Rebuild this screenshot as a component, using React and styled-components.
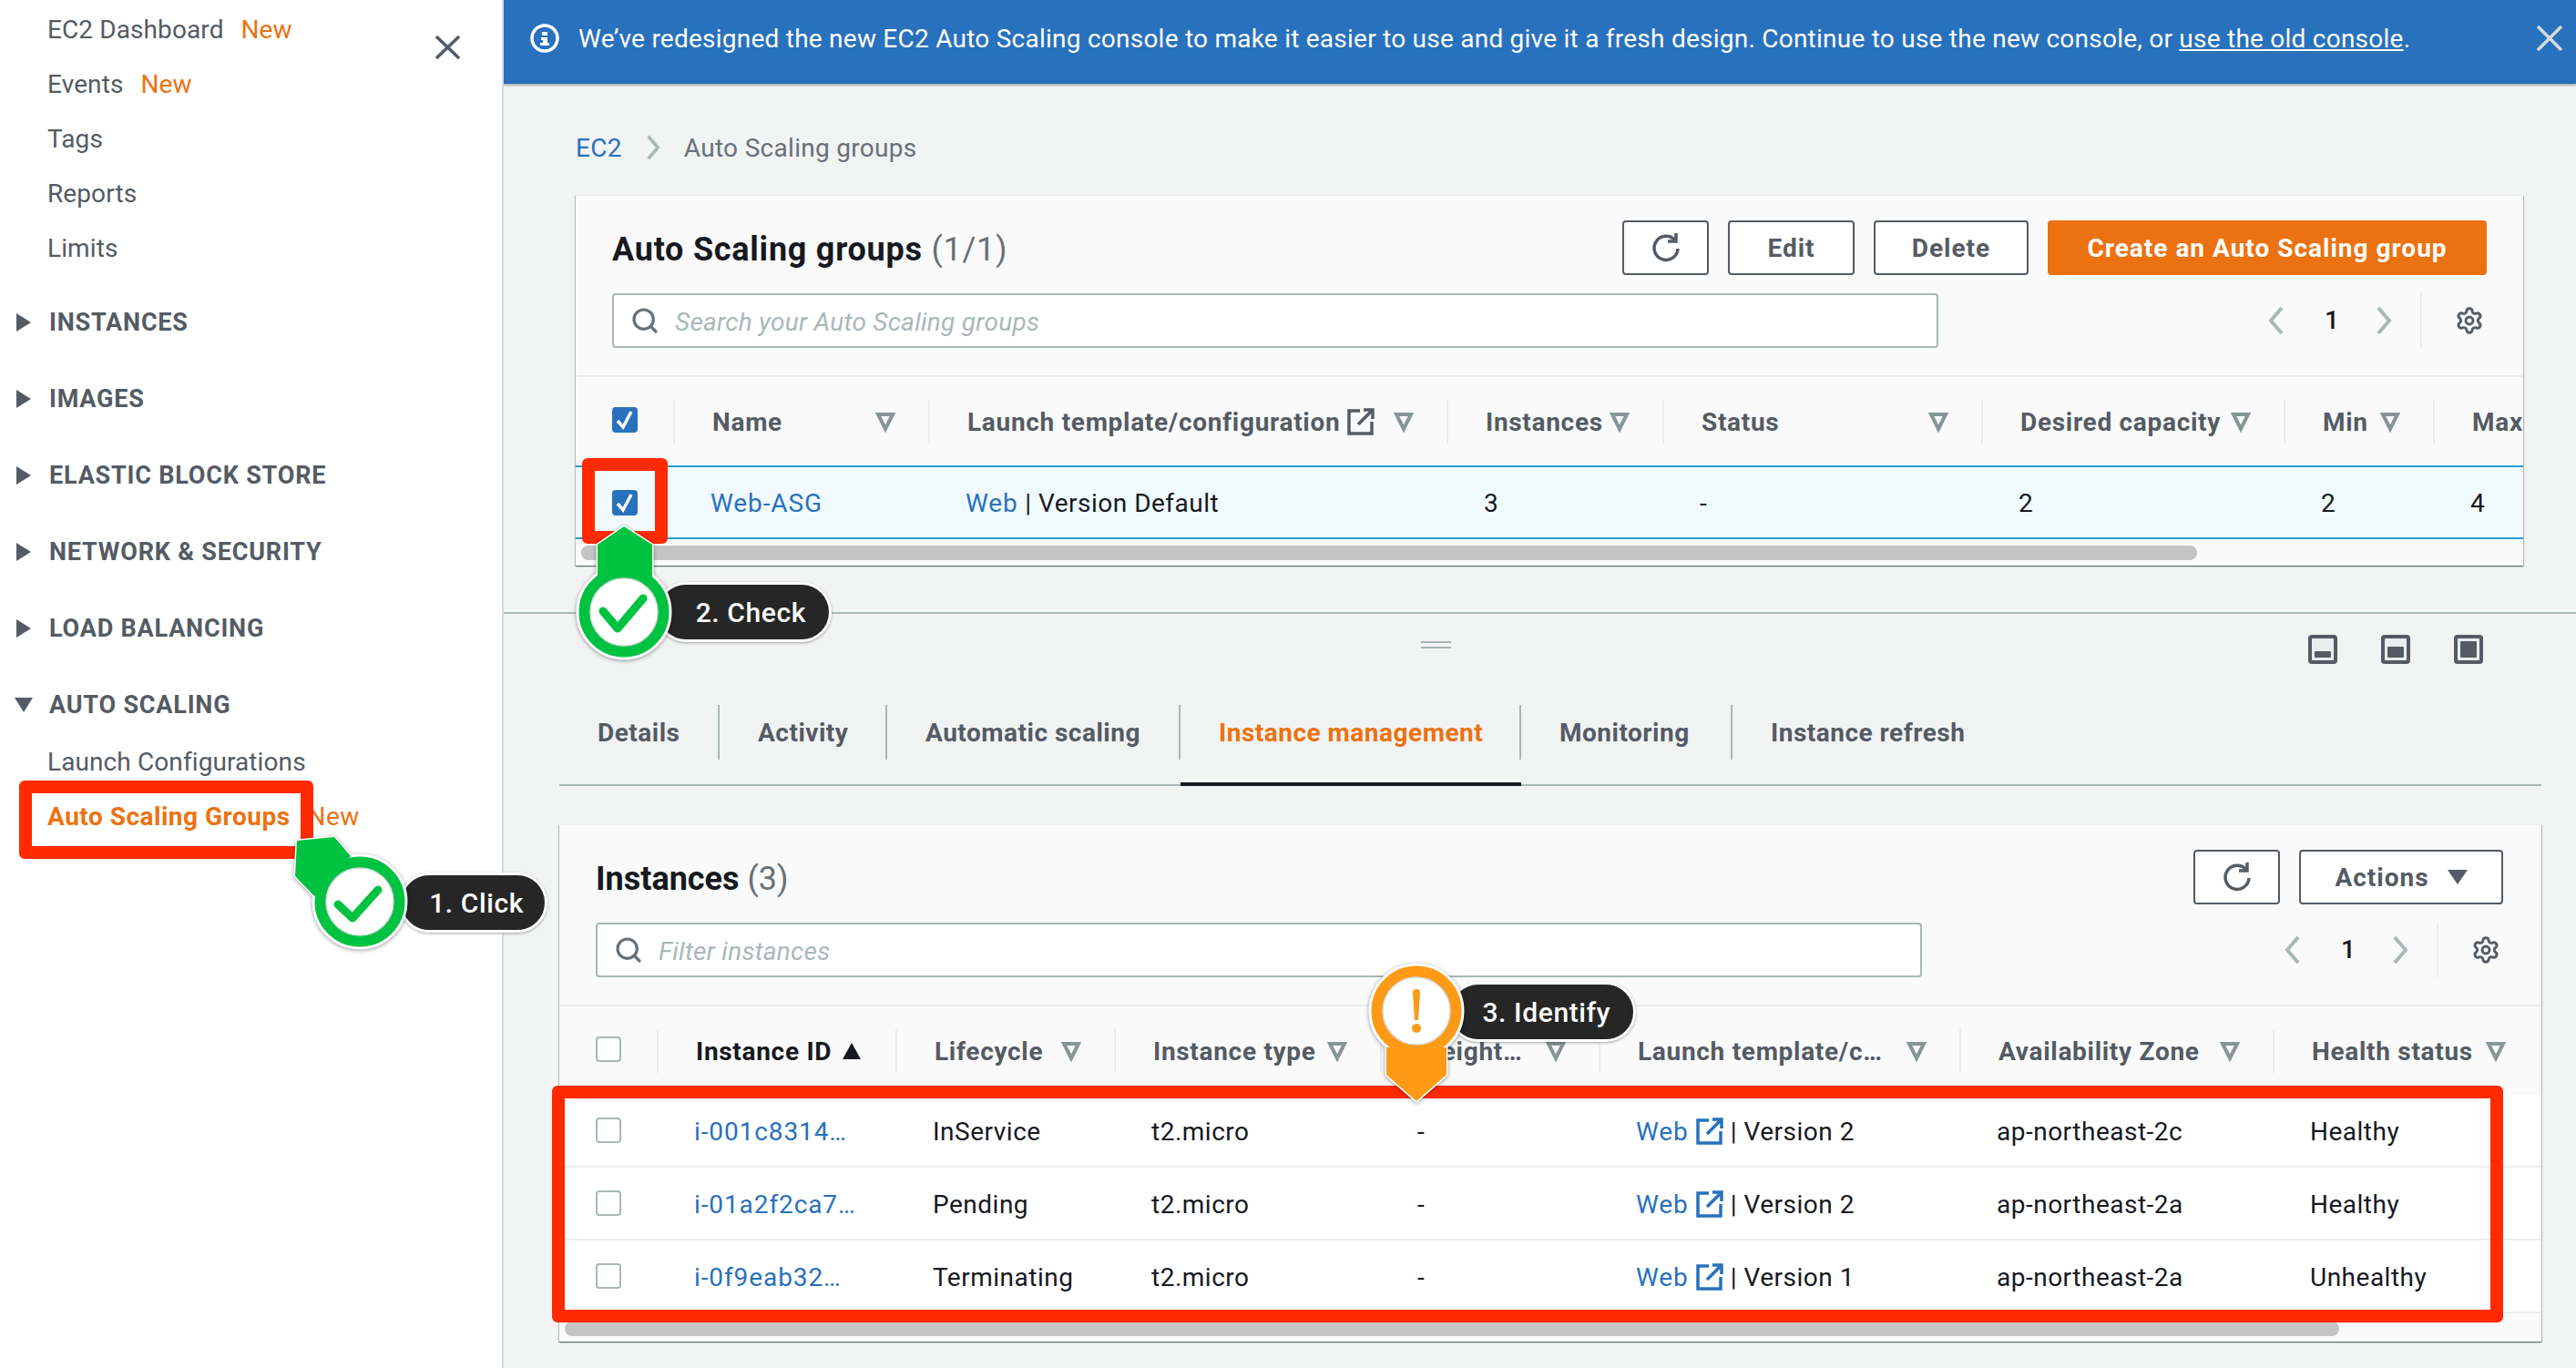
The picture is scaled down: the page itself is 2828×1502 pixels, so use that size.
import React from 'react';
import styled, { createGlobalStyle } from 'styled-components';
import { Search, Settings } from 'lucide-react';

const GlobalStyle = createGlobalStyle`
  html, body {
    margin: 0;
    padding: 0;
    background: #f2f3f3;
  }
  * {
    box-sizing: border-box;
  }
  body {
    font-family: Roboto, "Noto Sans", sans-serif;
    font-size: 28px;
    color: #16191f;
  }
`;

const Page = styled.div`
  position: relative;
  display: flex;
  width: 2828px;
  height: 1502px;
  overflow: hidden;
`;

/* ---------- sidebar ---------- */

const Sidebar = styled.nav`
  position: relative;
  flex: 0 0 553px;
  padding-top: 2px;
  background: #fff;
  border-right: 2px solid #d5dbdb;
`;

const CloseIcon = styled.svg`
  position: absolute;
  top: 39px;
  left: 478px;
`;

const NavItem = styled.div`
  display: flex;
  align-items: center;
  gap: 19px;
  height: 60px;
  padding-left: 52px;
  color: ${({ $active }) => ($active ? '#ec7211' : '#545b64')};
  font-weight: ${({ $active }) => ($active ? 700 : 400)};
  letter-spacing: ${({ $active }) => ($active ? 0.5 : 0.1)}px;
`;

const NewTag = styled.span`
  color: #ec7211;
  font-weight: 400;
`;

const NavSections = styled.div`
  margin-top: 10px;
`;

const NavSection = styled.div`
  display: flex;
  align-items: center;
  height: 84px;
  color: #545b64;
  font-size: 27px;
  font-weight: 700;
  letter-spacing: 0.8px;
`;

const CaretBox = styled.span`
  display: flex;
  justify-content: center;
  width: 54px;
  padding-right: 2px;
`;

const SubList = styled.div`
  margin-top: -10px;
`;

/* ---------- main ---------- */

const Main = styled.main`
  display: flex;
  flex: 1;
  flex-direction: column;
  min-width: 0;
`;

const Banner = styled.div`
  display: flex;
  flex: 0 0 92px;
  align-items: center;
  gap: 21px;
  padding: 0 15px 8px 29px;
  color: #fff;
  background: #2871bd;
  box-shadow: 0 2px 2px rgba(0, 28, 36, 0.3);
  letter-spacing: 0.24px;
`;

const BannerText = styled.div`
  flex: 1;
  a {
    color: #fff;
    text-decoration: underline;
  }
`;

const Breadcrumbs = styled.div`
  display: flex;
  flex: 0 0 122px;
  align-items: center;
  gap: 24px;
  padding: 18px 0 0 79px;
  color: #687078;
  letter-spacing: 0.3px;
  a {
    color: #2871bd;
  }
`;

const Panel = styled.section`
  width: ${({ $width }) => $width}px;
  margin-left: ${({ $left }) => $left}px;
  background: #fafafa;
  border-top: 1px solid #eaeded;
  box-shadow: 0 1px 1px rgba(0, 28, 36, 0.4), 1px 1px 1px rgba(0, 28, 36, 0.2), -1px 1px 1px rgba(0, 28, 36, 0.2);
`;

const PanelHeader = styled.header`
  display: flex;
  flex-direction: column;
  gap: 20px;
  height: 199px;
  padding: 27px ${({ $right }) => $right}px 0 40px;
  border-bottom: 2px solid #eaeded;
`;

const ToolRow = styled.div`
  display: flex;
  align-items: center;
  height: 60px;
`;

const Title = styled.h2`
  flex: 1;
  margin: 0;
  padding-top: 3px;
  font-size: 36px;
  font-weight: 700;
  letter-spacing: ${({ $tracking }) => $tracking}px;
  span {
    color: #687078;
    font-weight: 400;
  }
`;

const Actions = styled.div`
  display: flex;
  gap: 21px;
`;

const Button = styled.button`
  display: flex;
  align-items: center;
  justify-content: center;
  gap: 20px;
  width: ${({ $width }) => $width}px;
  height: 60px;
  padding: 0;
  color: ${({ $primary }) => ($primary ? '#fff' : '#545b64')};
  background: ${({ $primary }) => ($primary ? '#ec7211' : '#fff')};
  border: 2px solid ${({ $primary }) => ($primary ? '#ec7211' : '#545b64')};
  border-radius: 4px;
  font-family: inherit;
  font-size: 28px;
  font-weight: 700;
  letter-spacing: 1px;
`;

const SearchBox = styled.div`
  display: flex;
  align-items: center;
  gap: 17px;
  width: 1456px;
  height: 60px;
  padding-left: 18px;
  color: #aab7b8;
  background: #fff;
  border: 2px solid #aab7b8;
  border-radius: 4px;
  font-style: italic;
  letter-spacing: 0.25px;
  svg {
    color: #687078;
  }
  span {
    padding-top: 2px;
  }
`;

const Pager = styled.div`
  display: flex;
  align-items: center;
  margin-left: auto;
  margin-right: 3px;
  height: 60px;
`;

const PageNumber = styled.span`
  width: 12px;
  margin: 0 43px;
  font-weight: 500;
  line-height: 1;
  text-align: center;
`;

const PagerDivider = styled.span`
  width: 2px;
  height: 60px;
  margin: 0 36px 0 30px;
  background: #eaeded;
`;

const HeaderRow = styled.div`
  display: grid;
  grid-template-columns: ${({ $columns }) => $columns};
  align-items: center;
  height: 97px;
  overflow: hidden;
`;

const HeaderCell = styled.div`
  display: flex;
  align-items: center;
  justify-content: space-between;
  height: 48px;
  padding: 1px 36px 0 41px;
  border-right: 2px solid #eaeded;
  color: ${({ $sorted }) => ($sorted ? '#16191f' : '#545b64')};
  font-weight: 700;
  letter-spacing: 0.7px;
  white-space: nowrap;
  &:last-child {
    border-right: 0;
  }
`;

const CheckCell = styled.div`
  display: flex;
  align-items: center;
  height: 48px;
  padding: 0 0 ${({ $body }) => ($body ? 0 : 3)}px 40px;
  border-right: ${({ $body }) => ($body ? '0' : '2px solid #eaeded')};
`;

const LabelWithIcon = styled.span`
  display: inline-flex;
  align-items: center;
  gap: 8px;
`;

const Row = styled.div`
  display: grid;
  grid-template-columns: ${({ $columns }) => $columns};
  align-items: center;
  height: ${({ $selected }) => ($selected ? 81 : 80)}px;
  overflow: hidden;
  background: ${({ $selected }) => ($selected ? '#f1faff' : '#fff')};
  border-top: ${({ $selected }) => ($selected ? '2px solid #2b9fce' : '0')};
  border-bottom: 2px solid ${({ $selected }) => ($selected ? '#2b9fce' : '#eaeded')};
`;

const Cell = styled.div`
  display: flex;
  align-items: center;
  padding: 2px 0 0 39px;
  letter-spacing: 0.5px;
  white-space: nowrap;
  a {
    color: #2871bd;
    letter-spacing: 0.9px;
  }
`;

const VersionText = styled.span`
  margin-left: 8px;
`;

const Box = styled.span`
  display: flex;
  align-items: center;
  justify-content: center;
  width: 28px;
  height: 28px;
  background: ${({ $checked }) => ($checked ? '#2871bd' : '#fff')};
  border: 2px solid ${({ $checked }) => ($checked ? '#2871bd' : '#aab7b8')};
  border-radius: 4px;
`;

const ScrollTrack = styled.div`
  height: ${({ $top }) => $top + 22}px;
  padding: ${({ $top }) => $top}px 0 0 6px;
`;

const ScrollThumb = styled.div`
  width: ${({ $width }) => $width}px;
  height: 16px;
  background: #c4c4c4;
  border-radius: 8px;
`;

/* ---------- split panel ---------- */

const SplitPanel = styled.div`
  flex: 1;
  margin-top: 51px;
  border-top: 2px solid #aab7b8;
`;

const SplitBar = styled.div`
  display: flex;
  align-items: center;
  height: 77px;
  padding: 0 102px 0 1007px;
`;

const DragHandle = styled.div`
  width: 33px;
  height: 8px;
  margin-top: -9px;
  border-top: 2px solid #aab7b8;
  border-bottom: 2px solid #aab7b8;
`;

const LayoutIcons = styled.div`
  display: flex;
  gap: 48px;
  margin-left: auto;
`;

const Tabs = styled.div`
  display: flex;
  height: 112px;
  margin: 0 38px 0 61px;
  padding-top: 23px;
  border-bottom: 2px solid #aab7b8;
`;

const Tab = styled.div`
  width: ${({ $width }) => $width}px;
  height: 89px;
  border-bottom: 4px solid ${({ $active }) => ($active ? '#16191f' : 'transparent')};
  color: ${({ $active }) => ($active ? '#ec7211' : '#545b64')};
  font-weight: 700;
  letter-spacing: 0.5px;
`;

const TabLabel = styled.div`
  display: flex;
  align-items: center;
  height: 60px;
  padding-left: 42px;
  border-right: ${({ $last }) => ($last ? '0' : '2px solid #aab7b8')};
`;

const LowerPanelGap = styled.div`
  height: 42px;
`;

/* ---------- callouts ---------- */

const Highlight = styled.div`
  position: absolute;
  top: ${({ $top }) => $top}px;
  left: ${({ $left }) => $left}px;
  width: ${({ $width }) => $width}px;
  height: ${({ $height }) => $height}px;
  border: 14px solid #ff2a00;
  border-radius: 6px;
`;

const Pill = styled.div`
  position: absolute;
  top: ${({ $top }) => $top}px;
  left: ${({ $left }) => $left}px;
  display: flex;
  align-items: center;
  justify-content: flex-end;
  width: ${({ $width }) => $width}px;
  height: 66px;
  padding-right: ${({ $pad }) => $pad}px;
  color: #fff;
  background: #262626;
  border: 3px solid #fff;
  border-radius: 33px;
  box-shadow: 0 1px 3px rgba(0, 0, 0, 0.35);
  font-family: Roboto, "Liberation Sans", sans-serif;
  font-size: 30px;
  font-weight: 500;
  letter-spacing: 0.6px;
`;

const PinSvg = styled.svg`
  position: absolute;
  top: 0;
  left: 0;
  overflow: visible;
  filter: drop-shadow(0 1px 2px rgba(0, 0, 0, 0.4));
`;

const Filter = () => (
  <svg width="22" height="24" viewBox="0 0 22 24">
    <path d="M3 4h16l-8 16z" fill="none" stroke="#879596" strokeWidth="4" strokeLinejoin="miter" />
  </svg>
);

const SortUp = () => (
  <svg width="24" height="20" viewBox="0 0 24 20">
    <path d="M12 1l10 18H2z" fill="#16191f" />
  </svg>
);

const Refresh = () => (
  <svg width="34" height="36" viewBox="0 0 34 36" fill="none" stroke="#545b64" strokeWidth="3.5">
    <path d="M27 10a13 13 0 1 0 3 9" />
    <path d="M28 2v9h-9" />
  </svg>
);

const External = ({ color }) => (
  <svg width="30" height="30" viewBox="0 0 30 30" fill="none" stroke={color} strokeWidth="3.5">
    <path d="M14 3H2v25h25V15" />
    <path d="M12 18L27 3M18 2h10v10" />
  </svg>
);

const Chevron = ({ right, height = 32 }) => (
  <svg width="20" height={height} viewBox="0 0 20 32" fill="none" stroke="#aab7b8" strokeWidth="4">
    <path d={right ? 'M4 2l12 14L4 30' : 'M16 2L4 16l12 14'} />
  </svg>
);

const CheckMark = () => (
  <svg width="20" height="24" viewBox="0 0 20 24" fill="none" stroke="#fff" strokeWidth="3.5">
    <path d="M2 13l6 7L17 3" />
  </svg>
);

const Check = ({ checked }) => <Box $checked={checked}>{checked && <CheckMark />}</Box>;

const Caret = ({ open }) =>
  open ? (
    <svg width="20" height="16" viewBox="0 0 20 16">
      <path d="M0 0h20L10 16z" fill="#545b64" />
    </svg>
  ) : (
    <svg width="16" height="20" viewBox="0 0 16 20">
      <path d="M0 0l16 10L0 20z" fill="#545b64" />
    </svg>
  );

const TablePager = () => (
  <Pager>
    <Chevron />
    <PageNumber>1</PageNumber>
    <Chevron right />
    <PagerDivider />
    <Settings size={32} color="#545b64" strokeWidth={2.2} />
  </Pager>
);

const PaneIcon = ({ top, height }) => (
  <svg width="32" height="32" viewBox="0 0 32 32">
    <rect width="32" height="32" rx="4" fill="#545b64" />
    <rect x="4" y="4" width="24" height="24" rx="1" fill="#eaeded" />
    <rect x="7" y={top} width="18" height={height} rx="1" fill="#545b64" />
  </svg>
);

const Pin = ({ color, shape, cx, cy, children }) => (
  <PinSvg width="10" height="10">
    <path d={shape} fill={color} stroke="#fff" strokeWidth="3" strokeLinejoin="round" />
    <circle cx={cx} cy={cy} r="51" fill={color} stroke="#fff" strokeWidth="3" />
    <path d={shape} fill={color} />
    <circle cx={cx} cy={cy} r="49" fill={color} />
    <circle cx={cx} cy={cy} r="37" fill="#fff" stroke="#d5dbdb" strokeWidth="1.5" />
    {children}
  </PinSvg>
);

const groupColumns = '109px 280px 569px 237px 350px 332px 164px 97px';
const instanceColumns = '109px 262px 240px 292px 240px 396px 344px 290px';

const instances = [
  { id: 'i-001c8314…', state: 'InService', version: 'Version 2', zone: 'ap-northeast-2c', health: 'Healthy' },
  { id: 'i-01a2f2ca7…', state: 'Pending', version: 'Version 2', zone: 'ap-northeast-2a', health: 'Healthy' },
  { id: 'i-0f9eab32…', state: 'Terminating', version: 'Version 1', zone: 'ap-northeast-2a', health: 'Unhealthy' },
];

const App = () => (
  <Page>
    <GlobalStyle />
    <Sidebar>
      <CloseIcon width="27" height="26" viewBox="0 0 27 26" fill="none" stroke="#545b64" strokeWidth="3.5">
        <path d="M1 1l25 24M26 1L1 25" />
      </CloseIcon>
      <NavItem>EC2 Dashboard <NewTag>New</NewTag></NavItem>
      <NavItem>Events <NewTag>New</NewTag></NavItem>
      <NavItem>Tags</NavItem>
      <NavItem>Reports</NavItem>
      <NavItem>Limits</NavItem>
      <NavSections>
        {['INSTANCES', 'IMAGES', 'ELASTIC BLOCK STORE', 'NETWORK & SECURITY', 'LOAD BALANCING'].map(name => (
          <NavSection key={name}>
            <CaretBox><Caret /></CaretBox>
            {name}
          </NavSection>
        ))}
        <NavSection>
          <CaretBox><Caret open /></CaretBox>
          AUTO SCALING
        </NavSection>
      </NavSections>
      <SubList>
        <NavItem>Launch Configurations</NavItem>
        <NavItem $active>Auto Scaling Groups <NewTag>New</NewTag></NavItem>
      </SubList>
    </Sidebar>

    <Main>
      <Banner>
        <svg width="32" height="32" viewBox="0 0 32 32">
          <circle cx="16" cy="16" r="14" fill="none" stroke="#fff" strokeWidth="3.5" />
          <path d="M13 9h6v4h-6zM12 15h7v6h2v3H11v-3h3v-3h-2z" fill="#fff" />
        </svg>
        <BannerText>
          We’ve redesigned the new EC2 Auto Scaling console to make it easier to use and give it a fresh design. Continue to use the new console, or <a href="#old">use the old console</a>.
        </BannerText>
        <svg width="28" height="28" viewBox="0 0 28 28" fill="none" stroke="#d5dbdb" strokeWidth="3.5">
          <path d="M1 1l26 26M27 1L1 27" />
        </svg>
      </Banner>

      <Breadcrumbs>
        <a>EC2</a>
        <Chevron right height={28} />
        <span>Auto Scaling groups</span>
      </Breadcrumbs>

      <Panel $left={79} $width={2138}>
        <PanelHeader $right={40}>
          <ToolRow>
            <Title $tracking={0.75}>Auto Scaling groups <span>(1/1)</span></Title>
            <Actions>
              <Button $width={95}><Refresh /></Button>
              <Button $width={139}>Edit</Button>
              <Button $width={170}>Delete</Button>
              <Button $primary $width={482}>Create an Auto Scaling group</Button>
            </Actions>
          </ToolRow>
          <ToolRow>
            <SearchBox>
              <Search size={32} strokeWidth={2.4} />
              <span>Search your Auto Scaling groups</span>
            </SearchBox>
            <TablePager />
          </ToolRow>
        </PanelHeader>
        <HeaderRow $columns={groupColumns}>
          <CheckCell><Check checked /></CheckCell>
          <HeaderCell>Name <Filter /></HeaderCell>
          <HeaderCell>
            <LabelWithIcon>Launch template/configuration <External color="#545b64" /></LabelWithIcon>
            <Filter />
          </HeaderCell>
          <HeaderCell>Instances <Filter /></HeaderCell>
          <HeaderCell>Status <Filter /></HeaderCell>
          <HeaderCell>Desired capacity <Filter /></HeaderCell>
          <HeaderCell>Min <Filter /></HeaderCell>
          <HeaderCell>Max</HeaderCell>
        </HeaderRow>
        <Row $selected $columns={groupColumns}>
          <CheckCell $body><Check checked /></CheckCell>
          <Cell><a>Web-ASG</a></Cell>
          <Cell><a>Web</a>&nbsp;| Version Default</Cell>
          <Cell>3</Cell>
          <Cell>-</Cell>
          <Cell>2</Cell>
          <Cell>2</Cell>
          <Cell>4</Cell>
        </Row>
        <ScrollTrack $top={7}><ScrollThumb $width={1774} /></ScrollTrack>
      </Panel>

      <SplitPanel>
        <SplitBar>
          <DragHandle />
          <LayoutIcons>
            <PaneIcon top={18} height={7} />
            <PaneIcon top={13} height={12} />
            <PaneIcon top={7} height={18} />
          </LayoutIcons>
        </SplitBar>
        <Tabs>
          <Tab $width={176}><TabLabel>Details</TabLabel></Tab>
          <Tab $width={184}><TabLabel>Activity</TabLabel></Tab>
          <Tab $width={322}><TabLabel>Automatic scaling</TabLabel></Tab>
          <Tab $active $width={374}><TabLabel>Instance management</TabLabel></Tab>
          <Tab $width={232}><TabLabel>Monitoring</TabLabel></Tab>
          <Tab $width={300}><TabLabel $last>Instance refresh</TabLabel></Tab>
        </Tabs>
        <LowerPanelGap />
        <Panel $left={61} $width={2176}>
          <PanelHeader $right={42}>
            <ToolRow>
              <Title $tracking={0}>Instances <span>(3)</span></Title>
              <Actions>
                <Button $width={95}><Refresh /></Button>
                <Button $width={224}>Actions <svg width="22" height="16" viewBox="0 0 22 16"><path d="M0 0h22L11 16z" fill="#545b64" /></svg></Button>
              </Actions>
            </ToolRow>
            <ToolRow>
              <SearchBox>
                <Search size={32} strokeWidth={2.4} />
                <span>Filter instances</span>
              </SearchBox>
              <TablePager />
            </ToolRow>
          </PanelHeader>
          <HeaderRow $columns={instanceColumns}>
            <CheckCell><Check /></CheckCell>
            <HeaderCell $sorted>Instance ID <SortUp /></HeaderCell>
            <HeaderCell>Lifecycle <Filter /></HeaderCell>
            <HeaderCell>Instance type <Filter /></HeaderCell>
            <HeaderCell>Weight… <Filter /></HeaderCell>
            <HeaderCell>Launch template/c… <Filter /></HeaderCell>
            <HeaderCell>Availability Zone <Filter /></HeaderCell>
            <HeaderCell>Health status <Filter /></HeaderCell>
          </HeaderRow>
          {instances.map(item => (
            <Row key={item.id} $columns={instanceColumns}>
              <CheckCell $body><Check /></CheckCell>
              <Cell><a>{item.id}</a></Cell>
              <Cell>{item.state}</Cell>
              <Cell>t2.micro</Cell>
              <Cell>-</Cell>
              <Cell>
                <LabelWithIcon>
                  <a>Web</a>
                  <External color="#2871bd" />
                </LabelWithIcon>
                <VersionText>| {item.version}</VersionText>
              </Cell>
              <Cell>{item.zone}</Cell>
              <Cell>{item.health}</Cell>
            </Row>
          ))}
          <ScrollTrack $top={9}><ScrollThumb $width={1948} /></ScrollTrack>
        </Panel>
      </SplitPanel>
    </Main>

    <Highlight $left={21} $top={857} $width={323} $height={86} />
    <Pill $left={438} $top={958} $width={163} $pad={23}>1. Click</Pill>
    <Pin color="#00c241" cx={395} cy={990} shape="M385 940L367 919L326 923L324 962L345 984z">
      <path d="M371 993l16 15 28-31" fill="none" stroke="#00c241" strokeWidth="9" strokeLinecap="round" strokeLinejoin="round" />
    </Pin>

    <Highlight $left={639} $top={503} $width={94} $height={94} />
    <Pill $left={720} $top={639} $width={193} $pad={25}>2. Check</Pill>
    <Pin color="#00c241" cx={685} cy={672} shape="M685 578L716 598V640H656V598z">
      <path d="M662 671l16 19 28-33" fill="none" stroke="#00c241" strokeWidth="9" strokeLinecap="round" strokeLinejoin="round" />
    </Pin>

    <Highlight $left={606} $top={1192} $width={2142} $height={260} />
    <Pill $left={1590} $top={1078} $width={206} $pad={25}>3. Identify</Pill>
    <Pin color="#ff9a17" cx={1555} cy={1110} shape="M1522 1150H1588V1180L1555 1209L1522 1180z">
      <path d="M1551 1090a4 4 0 0 1 8 0l-2 30h-4z" fill="#ff9a17" />
      <circle cx="1555" cy="1129" r="5" fill="#ff9a17" />
    </Pin>
  </Page>
);

export default App;
